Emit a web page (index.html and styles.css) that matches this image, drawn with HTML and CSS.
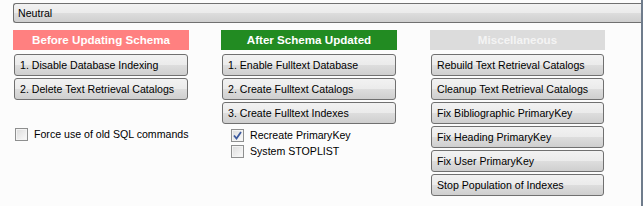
FILE: index.html
```html
<!DOCTYPE html>
<html lang="en">
<head>
    <meta charset="UTF-8">
    <title>Fulltext Maintenance</title>
    <link rel="stylesheet" href="styles.css">
</head>
<body>
    <div class="window">
        <div class="combo">Neutral</div>

        <div class="columns">
            <div class="column">
                <div class="header before">Before Updating Schema</div>
                <div class="button">1. Disable Database Indexing</div>
                <div class="button">2. Delete Text Retrieval Catalogs</div>
                <label class="check first">
                    <span class="box"></span>
                    Force use of old SQL commands
                </label>
            </div>

            <div class="column">
                <div class="header after">After Schema Updated</div>
                <div class="button">1. Enable Fulltext Database</div>
                <div class="button">2. Create Fulltext Catalogs</div>
                <div class="button">3. Create Fulltext Indexes</div>
                <label class="check indent">
                    <span class="box checked">
                        <svg width="9" height="9" viewBox="0 0 9 9">
                            <path d="M1 4.5 L3.5 7.5 L8 1" fill="none" stroke="#3d5a9e" stroke-width="1.8"/>
                        </svg>
                    </span>
                    Recreate PrimaryKey
                </label>
                <label class="check indent">
                    <span class="box"></span>
                    System STOPLIST
                </label>
            </div>

            <div class="column">
                <div class="header misc">Miscellaneous</div>
                <div class="button">Rebuild Text Retrieval Catalogs</div>
                <div class="button">Cleanup Text Retrieval Catalogs</div>
                <div class="button">Fix Bibliographic PrimaryKey</div>
                <div class="button">Fix Heading PrimaryKey</div>
                <div class="button">Fix User PrimaryKey</div>
                <div class="button">Stop Population of Indexes</div>
            </div>
        </div>
    </div>
</body>
</html>
```

FILE: styles.css
```css
body {
    margin: 0;
    background-color: #fcfcfc;
    font-family: Tahoma, "Liberation Sans", Arial, sans-serif;
    font-size: 10.6px;
    color: #000000;
}

.window {
    width: 641px;
    height: 206px;
    border-right: 2px solid #6f7c8c; /* frame edge */
    box-sizing: content-box;
    overflow: hidden;
}

.combo {
    margin: 3px 0 0 13px;
    height: 20px;
    box-sizing: border-box;
    padding: 3px 4px;
    border: 1px solid #707070;
    border-right: none;
    border-radius: 3px 0 0 3px;
    background: linear-gradient(#f2f2f2 0%, #ebebeb 50%, #dddddd 51%, #cfcfcf 100%);
    line-height: 12px;
}

.columns {
    display: grid;
    grid-template-columns: 176px 176px 176px;
    column-gap: 32px;
    padding-left: 13px;
    margin-top: 7px;
}

.column {
    display: flex;
    flex-direction: column;
}

.header {
    height: 20px;
    line-height: 20px;
    text-align: center;
    font-weight: bold;
    font-size: 11.6px;
    color: white;
    margin-bottom: 4px;
}

.before {
    background-color: #ff8080;
}

.after {
    background-color: #228b22;
}

.misc {
    background-color: #dcdcdc;
    color: #f4f4f4;
}

.column:nth-child(3) {
    margin-left: 1px;
}

.button {
    height: 22px;
    line-height: 20px;
    box-sizing: border-box;
    margin: 0 1px 2px 1px;
    padding: 0 5px;
    border: 1px solid #707070;
    border-radius: 3px;
    background: linear-gradient(#f2f2f2 0%, #ebebeb 50%, #dddddd 51%, #cfcfcf 100%);
    white-space: nowrap;
}

.check {
    display: flex;
    align-items: center;
    height: 16px;
    white-space: nowrap;
}

.check.first {
    margin-top: 24px;
    padding-left: 2px;
}

.check.indent {
    margin-top: 1px;
    padding-left: 10px;
}

.check.indent + .check.indent {
    margin-top: 0;
}

.box {
    flex-shrink: 0;
    width: 13px;
    height: 13px;
    box-sizing: border-box;
    border: 1px solid #8e8f8f;
    background: linear-gradient(135deg, #dcdcdc, #fbfbfb);
    box-shadow: inset 0 0 0 1px #f4f4f4;
    margin-right: 6px;
    display: flex;
    align-items: center;
    justify-content: center;
}
```
